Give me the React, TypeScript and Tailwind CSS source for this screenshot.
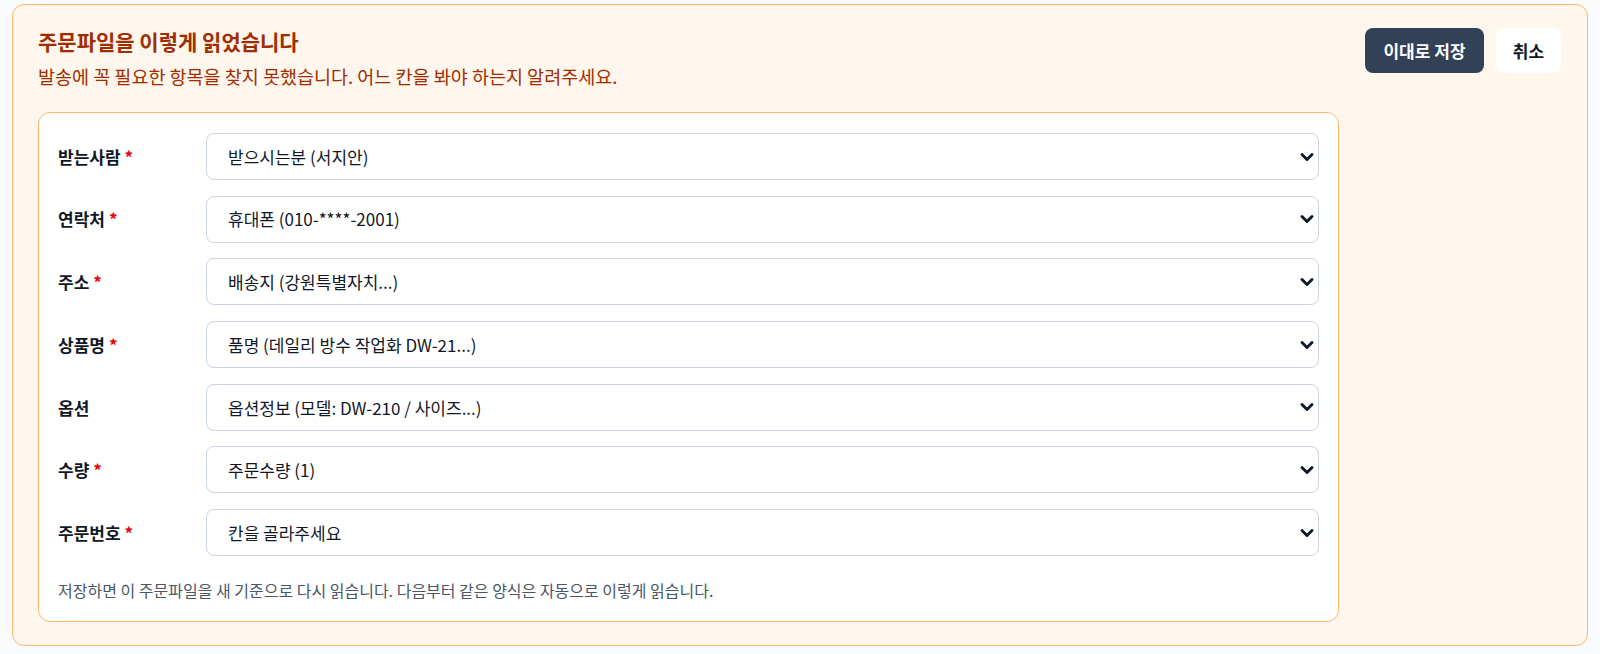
import { ChevronDown } from 'lucide-react';

const fields = [
    { label: '받는사람', required: true, value: '받으시는분 (서지안)' },
    { label: '연락처', required: true, value: '휴대폰 (010-****-2001)' },
    { label: '주소', required: true, value: '배송지 (강원특별자치...)' },
    { label: '상품명', required: true, value: '품명 (데일리 방수 작업화 DW-21...)' },
    { label: '옵션', required: false, value: '옵션정보 (모델: DW-210 / 사이즈...)' },
    { label: '수량', required: true, value: '주문수량 (1)' },
    { label: '주문번호', required: true, value: '칸을 골라주세요' },
];

const FieldRow = ({ label, required, value }: { label: string; required: boolean; value: string }) => (
    <div className="grid grid-cols-[148px_1fr] items-center">
        <label className="text-[17px] font-bold text-gray-900">
            {label}
            {required && <span className="ml-1 text-red-600">*</span>}
        </label>
        <div className="relative">
            <select
                defaultValue={value}
                className="h-[47px] w-full appearance-none rounded-lg border border-slate-300 bg-white pl-[21px] pr-10 text-[17px] text-gray-900 outline-none"
            >
                <option value={value}>{value}</option>
            </select>
            <ChevronDown
                className="pointer-events-none absolute right-[2px] top-1/2 h-5 w-5 -translate-y-1/2 text-gray-900"
                strokeWidth={3.5}
            />
        </div>
    </div>
);

export default function App() {
    return (
        <div
            className="min-h-screen bg-slate-50 px-3 pt-1"
            style={{ fontFamily: '"Noto Sans CJK KR", "Noto Sans", sans-serif' }}
        >
            <div className="flex gap-[26px] rounded-xl border border-orange-300 bg-orange-50 pb-[23px] pl-[25px] pr-[26px] pt-[22px]">
                <div className="flex-1">
                    <h1 className="text-[21px] font-bold leading-7 text-orange-800">주문파일을 이렇게 읽었습니다</h1>
                    <p className="mt-[7px] text-[18.5px] leading-7 text-orange-800">
                        발송에 꼭 필요한 항목을 찾지 못했습니다. 어느 칸을 봐야 하는지 알려주세요.
                    </p>
                    <div className="mt-[22px] rounded-xl border border-orange-300 bg-white px-[19px] pb-[19px] pt-5">
                        <div className="flex flex-col gap-[15.7px]">
                            {fields.map((f) => (
                                <FieldRow key={f.label} {...f} />
                            ))}
                        </div>
                        <p className="mt-[22px] text-[16px] leading-6 text-gray-600">
                            저장하면 이 주문파일을 새 기준으로 다시 읽습니다. 다음부터 같은 양식은 자동으로 이렇게 읽습니다.
                        </p>
                    </div>
                </div>
                <div className="mt-px flex items-start gap-3">
                    <button className="h-[45px] w-[119px] rounded-lg bg-slate-700 text-[17px] font-bold text-white">
                        이대로 저장
                    </button>
                    <button className="h-[45px] w-[65px] rounded-lg bg-white text-[17px] font-bold text-gray-900">
                        취소
                    </button>
                </div>
            </div>
        </div>
    );
}
